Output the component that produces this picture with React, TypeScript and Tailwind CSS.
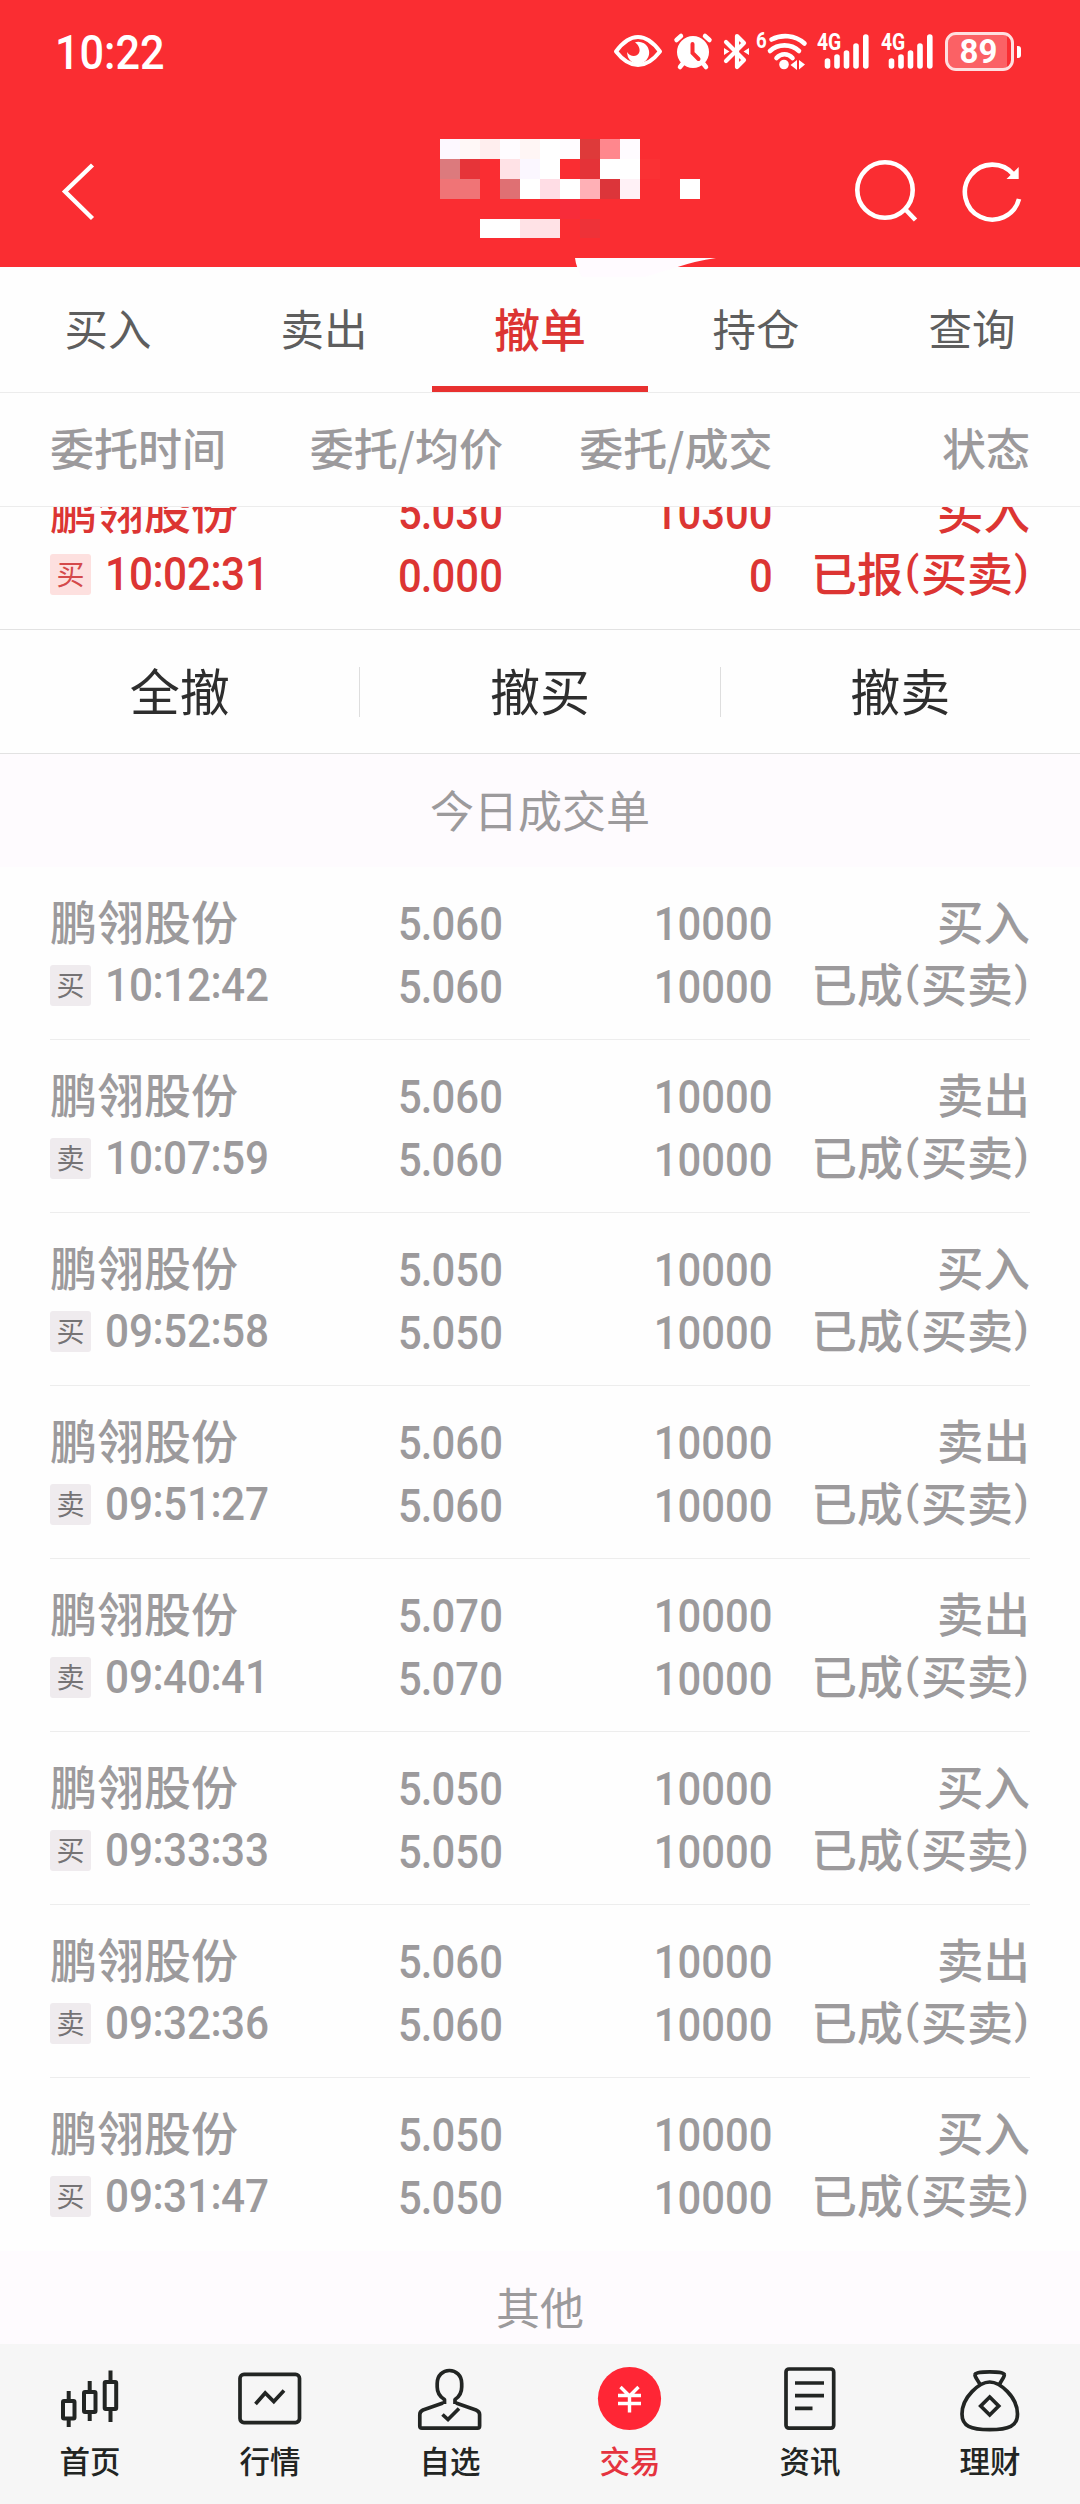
import React from "react";

type Side = "买" | "卖";
type Order = { time: string; price: string; avg: string; qty: string; done: string; side: Side; status: string; action: string };

const deal = (time: string, price: string, side: Side): Order => ({
  time,
  price,
  avg: price,
  qty: "10000",
  done: "10000",
  side,
  status: "已成",
  action: side === "买" ? "买入" : "卖出",
});

const deals: Order[] = [
  deal("10:12:42", "5.060", "买"),
  deal("10:07:59", "5.060", "卖"),
  deal("09:52:58", "5.050", "买"),
  deal("09:51:27", "5.060", "卖"),
  deal("09:40:41", "5.070", "卖"),
  deal("09:33:33", "5.050", "买"),
  deal("09:32:36", "5.060", "卖"),
  deal("09:31:47", "5.050", "买"),
];

const pending: Order = {
  time: "10:02:31", price: "5.030", avg: "0.000", qty: "10300", done: "0", side: "买", status: "已报", action: "买入",
};

function SignalIcon() {
  return (
    <div className="relative h-[104px] w-[53px]">
      <svg className="h-[104px] w-[53px]" viewBox="817 0 53 104" fill="none" stroke="#fff" strokeWidth="5.6" strokeLinecap="round">
        <path d="M827.5 61V66M837 57V66M846.5 53V66M856 46V66M865.8 37V66" />
      </svg>
      <span className="absolute left-0 top-[31px] origin-left scale-x-[0.84] font-['Roboto'] text-[23px] leading-[23px] font-bold">4G</span>
    </div>
  );
}

function StatusBar() {
  return (
    <div className="flex h-[104px] text-white">
      <div className="ml-[55px] w-[120px] pt-[3px] font-['Roboto'] text-[48px] leading-[100px] font-medium">
        <span className="inline-block origin-left scale-x-[0.9]">10:22</span>
      </div>
      <svg className="ml-[438px] h-[104px] w-[50px]" viewBox="613 0 50 104">
        <path d="M616 51.5C623 42 630 37 638 37S653 42 660 51.5C653 60.500 646 65 638 65S623 60.500 616 51.500Z" fill="none" stroke="#fff" strokeWidth="4" strokeLinejoin="round" />
        <path d="M635 42.200A11 11 0 1 1 627.200 52C629.500 56.500 636.500 57.500 639 53C641 49 638 44.500 635 42.200Z" fill="#fff" />
      </svg>
      <svg className="ml-[10px] h-[104px] w-[40px]" viewBox="673 0 40 104" fill="none" stroke="#fff" strokeLinecap="round">
        <circle cx="693" cy="52" r="16" fill="#fff" stroke="none" />
        <path d="M676.500 40L681 36M709.500 40L705 36" strokeWidth="4.500" />
        <path d="M684 62L680 67M702 62L706 67" strokeWidth="4.500" />
        <path d="M692.500 44V53L698.500 59" stroke="#fa2d32" strokeWidth="4" />
      </svg>
      <svg className="ml-[9px] h-[104px] w-[30px]" viewBox="722 0 30 104" fill="none" stroke="#fff" strokeWidth="4.200" strokeLinecap="round" strokeLinejoin="round">
        <path d="M726 42L744 60L737 67V36L744 43L726 61" />
        <path d="M724 48L729.500 51.500L724 55ZM749 48L743.500 51.500L749 55Z" fill="#fff" stroke="none" />
      </svg>
      <div className="relative ml-[4px] h-[104px] w-[53px]">
        <span className="absolute left-0 top-[30px] origin-left scale-x-[0.85] font-['Roboto'] text-[22px] leading-[22px] font-bold">6</span>
        <svg className="h-[104px] w-[53px]" viewBox="756 0 53 104" fill="none" stroke="#fff" strokeWidth="4.600" strokeLinecap="round">
          <path d="M771.500 39.500C781 34.500 795 34.500 804.500 43.500M770 51C778 43.500 791 43.500 799 51M776.500 58C781 53 788 53 792.500 58" />
          <circle cx="784" cy="64.500" r="4.800" fill="#fff" stroke="none" />
          <path d="M790.500 65L797 60V70ZM799 60L805 64.500L799 69.500Z" fill="#fff" stroke="none" />
        </svg>
      </div>
      <div className="ml-[8px]"><SignalIcon /></div>
      <div className="ml-[11px]"><SignalIcon /></div>
      <div className="ml-[11px] mt-[32px] flex h-[39px] items-center">
        <div className="flex h-[39px] w-[69px] rounded-[11px] border-[3px] border-white/85">
          <div className="w-[59px] rounded-l-[8px] bg-white/25 text-center font-['Roboto'] text-[33px] leading-[34px] font-bold">
            <span className="inline-block translate-x-[1px]">89</span>
          </div>
        </div>
        <div className="ml-[3px] h-[12px] w-[4px] rounded-r-[3px] bg-white" />
      </div>
    </div>
  );
}

const mosaic: string[][] = [
  ["bg-[#fdf8ff]", "bg-[#fff8f7]", "bg-[#ffeeee]", "bg-[#fffcff]", "bg-[#fff6f5]", "bg-white", "bg-[#fffcff]", "bg-[#de3a3a]", "bg-[#ff878d]", "bg-[#fffbff]", "", "", ""],
  ["bg-[#dc7a7d]", "bg-[#e63439]", "", "bg-[#ffe2e6]", "bg-[#fbf7ff]", "bg-white", "", "bg-[#e43338]", "bg-white", "bg-white", "bg-[#fa3134]", "", ""],
  ["bg-[#f07476]", "bg-[#f07476]", "", "bg-[#df7073]", "bg-white", "bg-[#ffdde5]", "bg-white", "bg-[#ffb0b6]", "bg-[#dc353a]", "bg-[#fff1f6]", "", "", "bg-white"],
  ["", "", "", "", "", "", "bg-[#f72c3a]", "", "", "", "", "", ""],
  ["", "", "bg-white", "bg-white", "bg-[#ffe2e6]", "bg-[#ffe2e6]", "", "bg-[#ee3238]", "", "", "", "", ""],
];

function TitleBar() {
  return (
    <div className="relative flex h-[163px]">
      <svg className="ml-[58px] h-[163px] w-[40px]" viewBox="58 104 40 163" fill="none" stroke="#fff" strokeWidth="4.400">
        <path d="M92.500 165L65 191.500L92.500 218.500" />
      </svg>
      <div className="ml-[342px] mt-[35px] grid h-[99px] grid-cols-[repeat(13,20px)] grid-rows-[20px_20px_20px_20px_19px]">
        {mosaic.flat().map((c, i) => (
          <div key={i} className={c} />
        ))}
      </div>
      <svg className="ml-[150px] h-[163px] w-[70px]" viewBox="850 104 70 163" fill="none" stroke="#fff" strokeWidth="4.600">
        <circle cx="885" cy="190" r="27.700" />
        <path d="M904.500 208.500L915.500 220" />
      </svg>
      <svg className="ml-[37px] h-[163px] w-[70px]" viewBox="957 104 70 163" fill="none" stroke="#fff" strokeWidth="4.600">
        <path d="M1013.500 174.500A27.500 27.500 0 1 0 1019 199" />
        <path d="M1018.700 167V179H1006.500Z" fill="#fff" stroke="none" />
      </svg>
      <svg className="absolute left-[575px] top-[154px] h-[20px] w-[142px]" viewBox="0 0 142 20">
        <path d="M0 0H141Q120 3 101 9.500Q85 14 70 19H7Q1 9 0 0Z" fill="#fffbff" />
      </svg>
    </div>
  );
}

/* Digits set in a narrow face, with the decimal point and colons kept tight. */
function Num({ value, left = false }: { value: string; left?: boolean }) {
  return (
    <span
      className={
        left
          ? "inline-block origin-left translate-y-[7px] scale-x-[0.9] font-['Roboto'] text-[47px] font-medium"
          : "inline-block origin-right translate-y-[3.5px] scale-x-[0.89] font-['Roboto'] text-[47px] font-medium"
      }
    >
      {value.split(/([.:])/).map((p, i) =>
        p === "." ? (
          <span key={i} className="-mx-[1px]">.</span>
        ) : p === ":" ? (
          <span key={i} className="relative -top-[3px] -mx-[0.7px]">:</span>
        ) : (
          <React.Fragment key={i}>{p}</React.Fragment>
        )
      )}
    </span>
  );
}

function OrderRow({ o, active = false, divider = true }: { o: Order; active?: boolean; divider?: boolean }) {
  return (
    <div className={active ? "h-[173px] px-[50px] text-[#dc3533]" : "h-[173px] px-[50px] text-[#9c9a9c]"}>
      <div
        className={
          divider
            ? "grid h-[173px] grid-cols-[220px_233px_269.5px_257.5px] grid-rows-[63px_63px] border-b border-[#ededed] pt-[21px] leading-[63px]"
            : "grid h-[173px] grid-cols-[220px_233px_269.5px_257.5px] grid-rows-[63px_63px] pt-[21px] leading-[63px]"
        }
      >
        <div className="text-[47px] font-medium">鹏翎股份</div>
        <div className="text-right"><Num value={o.price} /></div>
        <div className="text-right"><Num value={o.qty} /></div>
        <div className="text-right text-[46.5px] font-medium">{o.action}</div>
        <div className="flex items-center whitespace-nowrap">
          <span
            className={
              active
                ? "mb-[-5px] flex h-[41px] w-[41px] shrink-0 items-center justify-center rounded-[3px] bg-[#fde0df] text-[28px] leading-[38px] text-[#d44a4b]"
                : "mb-[-5px] flex h-[41px] w-[41px] shrink-0 items-center justify-center rounded-[3px] bg-[#efebee] text-[28px] leading-[38px] text-[#757375]"
            }
          >
            <span className="-mt-[3px]">{o.side}</span>
          </span>
          <span className="ml-[14px]"><Num value={o.time} left /></span>
        </div>
        <div className="text-right"><Num value={o.avg} /></div>
        <div className="text-right"><Num value={o.done} /></div>
        <div className="flex justify-end whitespace-nowrap text-[46px] font-medium">
          <span>{o.status}</span>
          <span className="w-[18px] text-center font-['Roboto'] text-[41px]">(</span>
          <span>买卖</span>
          <span className="w-[17px] text-center font-['Roboto'] text-[41px]">)</span>
        </div>
      </div>
    </div>
  );
}

const navItems: { label: string; icon: React.ReactNode; active?: boolean }[] = [
  {
    label: "首页",
    icon: (
      <g strokeWidth="4">
        <rect x="9" y="37" width="11.500" height="17.500" rx="1" />
        <path d="M14.700 27V37M14.700 54V63" />
        <rect x="30" y="28" width="11.500" height="20" rx="1" />
        <path d="M35.700 17V28M35.700 48V57" />
        <rect x="50.700" y="18" width="11.500" height="27" rx="1" />
        <path d="M56.500 6.500V18M56.500 45V58" />
      </g>
    ),
  },
  {
    label: "行情",
    icon: (
      <g strokeWidth="3.700">
        <rect x="6" y="10.300" width="59.500" height="48.300" rx="4" />
        <path d="M21.500 40L31.200 29L39.800 37.500L50 26.500" />
      </g>
    ),
  },
  {
    label: "自选",
    icon: (
      <g strokeWidth="3.700" strokeLinejoin="round">
        <path d="M30.500 40V35.500C24.500 32 23.200 28 23.200 23V19.500C23.200 11 29 6.500 35.400 6.500S47.700 11 47.700 19.500V23C47.700 28 46.500 32 41 35.500V40M42 39L62 46Q65.600 47.500 65.600 50.500V62Q65.600 64.200 63.500 64.200H8Q5.800 64.200 5.800 62V50.500Q5.800 47.500 9 46L29 39" />
        <path d="M28.500 50.500L34 55.500L45 44.500" strokeLinejoin="miter" />
      </g>
    ),
  },
  {
    label: "交易",
    active: true,
    icon: (
      <g stroke="#fff" strokeWidth="3.400">
        <circle cx="35.500" cy="34.500" r="31.600" fill="#ff2635" stroke="none" />
        <path d="M26.500 23L35.500 32L44.500 23M24 31.500H47M24 39.500H47M35.500 31V48.500" />
      </g>
    ),
  },
  {
    label: "资讯",
    icon: (
      <g strokeWidth="3.700">
        <rect x="12" y="5" width="47.700" height="59.200" rx="3" />
        <path d="M21 19H50M21 31.700H50M21 44.300H38.500" />
      </g>
    ),
  },
  {
    label: "理财",
    icon: (
      <g strokeWidth="3.700" strokeLinejoin="round">
        <path d="M26 20.500C24 16 20.500 13 21 10.500C21.500 7 50 7 50.300 10.500C50.700 13 47.500 16 45.500 20.500" />
        <path d="M35.700 18C46 18 63.500 33 63.500 50C63.500 62 55 65.700 35.700 65.700S8 62 8 50C8 33 25.500 18 35.700 18Z" />
        <path d="M35.700 33L44.700 42L35.700 51L26.700 42Z" strokeLinejoin="miter" />
      </g>
    ),
  },
];

function Section({ title }: { title: string }) {
  return (
    <div className="h-[113px] bg-[#fefbfe] text-center text-[44px] leading-[110px] text-[#9c9a9c]">{title}</div>
  );
}

export default function App() {
  const tabs = ["买入", "卖出", "撤单", "持仓", "查询"];
  return (
    <div className="flex h-[2504px] w-[1080px] flex-col overflow-hidden bg-[#fefefe] font-['Noto_Sans_CJK_SC',sans-serif]">
      <header className="relative z-10 h-[267px] shrink-0 bg-[#fa2d32]">
        <StatusBar />
        <TitleBar />
      </header>

      <nav className="grid h-[126px] shrink-0 grid-cols-5 border-b border-[#ececec] text-center leading-[121px]">
        {tabs.map((t) =>
          t === "撤单" ? (
            <div key={t} className="h-[125px] border-b-[6px] border-[#e83130] text-[46px] font-medium text-[#dc3533]">{t}</div>
          ) : (
            <div key={t} className="text-[43.5px] text-[#5e5e5e]">{t}</div>
          )
        )}
      </nav>

      <div className="grid h-[114px] shrink-0 grid-cols-[220px_233px_269.5px_257.5px] border-b border-[#ececec] px-[50px] text-[44px] leading-[109px] font-medium text-[#9c9a9c]">
        <div>委托时间</div>
        <div className="text-right">委托/均价</div>
        <div className="text-right">委托/成交</div>
        <div className="text-right">状态</div>
      </div>

      <div className="flex h-[122px] shrink-0 flex-col justify-end overflow-hidden">
        <div className="shrink-0"><OrderRow o={pending} active divider={false} /></div>
      </div>

      <div className="flex h-[125px] shrink-0 items-center border-y border-[#e2e2e2] text-[50px] text-[#2e2e2e]">
        {["全撤", "撤买", "撤卖"].map((a, i) => (
          <React.Fragment key={a}>
            {i > 0 && <div className="h-[50px] w-px bg-[#dedede]" />}
            <div className="flex-1 pb-[6px] text-center leading-[100px]">{a}</div>
          </React.Fragment>
        ))}
      </div>

      <div className="h-[1590px] shrink-0 overflow-hidden">
        <Section title="今日成交单" />
        {deals.map((o, i) => (
          <OrderRow key={o.time} o={o} divider={i < deals.length - 1} />
        ))}
        <Section title="其他" />
      </div>

      <footer className="grid h-[160px] shrink-0 grid-cols-6 bg-[#f6f6f6]">
        {navItems.map((n) => (
          <div key={n.label} className="flex flex-col items-center pt-[20px]">
            <svg className="h-[72px] w-[72px]" viewBox="0 0 72 72" fill="none" stroke="#222523">
              {n.icon}
            </svg>
            <div
              className={
                n.active
                  ? "mt-[6px] text-[30.5px] leading-[36px] font-medium text-[#e5343f]"
                  : "mt-[6px] text-[30.5px] leading-[36px] font-medium text-[#222523]"
              }
            >
              {n.label}
            </div>
          </div>
        ))}
      </footer>
    </div>
  );
}
